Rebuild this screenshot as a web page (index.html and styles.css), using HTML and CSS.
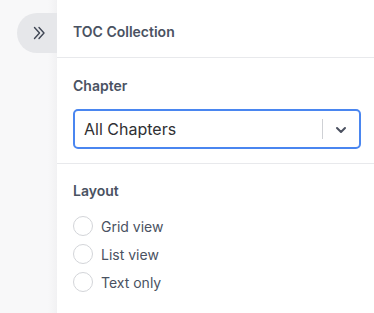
FILE: index.html
```html
<!DOCTYPE html>
<html>
<head>
<meta charset="utf-8">
<link rel="stylesheet" href="styles.css">
</head>
<body>
<div class="app">
  <div class="rail">
    <button class="toggle" aria-label="Expand">
      <svg width="16" height="16" viewBox="0 0 16 16" fill="none" stroke="#3f4654" stroke-width="1.4" stroke-linecap="round" stroke-linejoin="round">
        <path d="M3.5 2.5 L8.5 8 L3.5 13.5"/>
        <path d="M8 2.5 L13 8 L8 13.5"/>
      </svg>
    </button>
  </div>
  <div class="panel">
    <div class="header">TOC Collection</div>
    <div class="section">
      <div class="label">Chapter</div>
      <div class="select">
        <span class="value">All Chapters</span>
        <span class="sep"></span>
        <span class="arrow">
          <svg width="14" height="14" viewBox="0 0 14 14" fill="none" stroke="#4b5160" stroke-width="2" stroke-linecap="round" stroke-linejoin="round">
            <path d="M3 5 L7 9 L11 5"/>
          </svg>
        </span>
      </div>
    </div>
    <div class="section layout">
      <div class="label">Layout</div>
      <div class="radios">
        <label class="radio"><span class="circle"></span>Grid view</label>
        <label class="radio"><span class="circle"></span>List view</label>
        <label class="radio"><span class="circle"></span>Text only</label>
      </div>
    </div>
  </div>
</div>
</body>
</html>
```
FILE: styles.css
```css
* { box-sizing: border-box; }
html, body { margin: 0; padding: 0; }
body {
  font-family: Inter, "Liberation Sans", sans-serif;
  background: #f6f6f7;
  width: 374px;
  height: 313px;
  overflow: hidden;
}
.app {
  display: flex;
  height: 313px;
}
.rail {
  width: 57px;
  flex: none;
  padding-top: 13px;
  display: flex;
  flex-direction: column;
  align-items: flex-end;
  background: linear-gradient(to right, #f8f8f9 0, #f8f8f9 48px, #f1f1f3 57px);
}
.toggle {
  width: 40px;
  height: 40px;
  border: none;
  padding: 0 0 0 4px;
  margin: 0;
  background: #e6e7ea;
  border-radius: 20px 0 0 20px;
  display: flex;
  align-items: center;
  justify-content: center;
}
.panel {
  flex: 1;
  background: #ffffff;
  display: flex;
  flex-direction: column;
}
.header {
  height: 58px;
  padding: 0 16px;
  display: flex;
  align-items: center;
  font-size: 14px;
  font-weight: 600;
  color: #4a5262;
  border-bottom: 1px solid #e8e9ec;
  padding-top: 5px;
}
.section {
  padding: 18px 13px 14px 16px;
  border-bottom: 1px solid #e8e9ec;
}
.label {
  font-size: 14px;
  font-weight: 600;
  color: #4a5262;
  line-height: 20px;
}
.select {
  margin-top: 13px;
  height: 40px;
  border: 2px solid #4a86f0;
  border-radius: 5px;
  display: flex;
  align-items: center;
  padding-left: 9px;
}
.value {
  flex: 1;
  font-size: 16px;
  color: #2f3033;
}
.sep {
  width: 1px;
  height: 20px;
  background: #cfd1d5;
}
.arrow {
  width: 36px;
  display: flex;
  justify-content: center;
  align-items: center;
  padding-top: 1px;
}
.layout {
  border-bottom: none;
  padding-top: 17px;
}
.radios {
  margin-top: 11px;
  display: flex;
  flex-direction: column;
}
.radio {
  display: flex;
  align-items: center;
  height: 28px;
  font-size: 14px;
  color: #4a5262;
}
.circle {
  width: 20px;
  height: 20px;
  border: 1px solid #d3d5d9;
  border-radius: 50%;
  margin-right: 8px;
  background: #fff;
}
```
